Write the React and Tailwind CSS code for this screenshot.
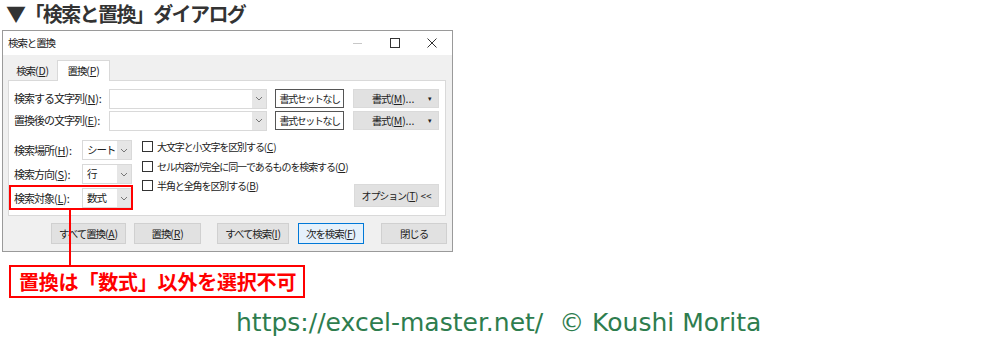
import React from "react";

const jp = { fontFamily: '"Noto Sans CJK JP", "Noto Sans", sans-serif' };
const T = "text-[10.5px] tracking-[-1.1px] whitespace-nowrap text-[#222]";

function U({ c }) {
  return (
    <span className="tracking-[-0.2px]">
      (<span className="underline underline-offset-1">{c}</span>)
    </span>
  );
}

function Chevron() {
  return (
    <svg width="8" height="5" viewBox="0 0 8 5">
      <path d="M1 1 L4 4 L7 1" fill="none" stroke="#777" strokeWidth="1" />
    </svg>
  );
}

function Combo({ text, w }) {
  return (
    <div className={`flex h-[20px] ${w} border border-[#d9d9d9] bg-white shrink-0`}>
      <div className={`flex-1 pl-[4px] leading-[18px] ${T}`}>{text}</div>
      <div className="w-[14px] bg-[#e6e6e6] flex items-center justify-center">
        <Chevron />
      </div>
    </div>
  );
}

function Check({ children }) {
  return (
    <div className="flex items-center h-[19.5px]">
      <div className="w-[11px] h-[11px] border border-[#333] bg-white shrink-0" />
      <span className="ml-[4px] text-[10px] tracking-[-1.1px] whitespace-nowrap text-[#222]">{children}</span>
    </div>
  );
}

function Btn({ w, children, blue }) {
  return (
    <div
      className={`${w} h-[21px] flex items-center justify-center ${T} ${
        blue ? "border border-[#0078d7] bg-[#e5f1fb]" : "border border-[#d0d0d0] bg-[#e1e1e1]"
      }`}
    >
      {children}
    </div>
  );
}

function FormatRow({ label, k }) {
  return (
    <div className="flex items-center h-[19px]">
      <div className="w-[100px] pl-[5px] text-[11px] tracking-[-1px] whitespace-nowrap text-[#222]">
        {label}
        <U c={k} />:
      </div>
      <Combo text="" w="w-[158px]" />
      <div className="ml-[8px] w-[69px] h-[19px] border border-[#555] bg-white flex items-center justify-center text-[10px] tracking-[-1.4px] whitespace-nowrap text-[#222] shrink-0">
        書式セットなし
      </div>
      <div className={`ml-[9px] w-[86px] h-[19px] bg-[#e1e1e1] border border-[#dadada] flex items-center shrink-0 ${T}`}>
        <span className="flex-1 text-center pl-[4px]">
          書式<U c="M" />
          <span className="tracking-[0px]">...</span>
        </span>
        <span className="w-[10px] text-[7px] leading-none">▾</span>
      </div>
    </div>
  );
}

export default function App() {
  return (
    <div className="w-[1000px] h-[345px] bg-white relative overflow-hidden" style={jp}>
      {/* heading */}
      <div className="h-[30px] pl-[6px] pt-[1px] text-[20px] leading-[26px] font-bold tracking-[-1.6px] text-[#333] whitespace-nowrap">
        ▼「検索と置換」ダイアログ
      </div>

      {/* dialog */}
      <div className="ml-[2px] w-[451px] h-[222px] border border-[#9a9a9a] bg-[#f0f0f0] flex flex-col">
        {/* title bar */}
        <div className="h-[24px] bg-white flex items-center shrink-0">
          <span className={`pl-[5px] ${T}`}>検索と置換</span>
          <div className="ml-auto flex items-center h-full">
            <div className="w-[38px] flex justify-center">
              <div className="w-[9px] h-px bg-[#c8c8c8]" />
            </div>
            <div className="w-[38px] flex justify-center">
              <div className="w-[10px] h-[10px] border border-[#333]" />
            </div>
            <div className="w-[38px] flex justify-center pr-[2px]">
              <svg width="10" height="10" viewBox="0 0 10 10">
                <path d="M0.5 0.5 L9.5 9.5 M9.5 0.5 L0.5 9.5" stroke="#333" strokeWidth="1" />
              </svg>
            </div>
          </div>
        </div>

        {/* body */}
        <div className="pl-[5px] pt-[4px] flex-1 flex flex-col">
          {/* tabs */}
          <div className="flex items-end h-[21px] relative z-10">
            <div className={`w-[49px] h-[19px] flex items-center justify-center ${T}`}>
              検索<U c="D" />
            </div>
            <div className={`w-[53px] h-[21px] -mb-px bg-white border border-b-0 border-[#d9d9d9] flex items-center justify-center ${T}`}>
              置換<U c="P" />
            </div>
          </div>

          {/* panel */}
          <div className="w-[438px] h-[136px] bg-white border border-[#d9d9d9] flex flex-col">
            <div className="mt-[8px]">
              <FormatRow label="検索する文字列" k="N" />
            </div>
            <div className="mt-[3px]">
              <FormatRow label="置換後の文字列" k="E" />
            </div>

            <div className="flex mt-[7px]">
              <div className="flex flex-col gap-[4px] pt-[3px]">
                {[
                  ["検索場所", "H", "シート"],
                  ["検索方向", "S", "行"],
                  ["検索対象", "L", "数式"],
                ].map(([l, k, v]) => (
                  <div key={k} className="flex items-center h-[20px]">
                    <div className="w-[73px] pl-[5px] text-[11px] tracking-[-1px] whitespace-nowrap text-[#222]">
                      {l}
                      <U c={k} />:
                    </div>
                    <Combo text={v} w="w-[50px]" />
                  </div>
                ))}
              </div>
              <div className="ml-[10px] flex flex-col">
                <Check>
                  大文字と小文字を区別する<U c="C" />
                </Check>
                <Check>
                  セル内容が完全に同一であるものを検索する<U c="O" />
                </Check>
                <Check>
                  半角と全角を区別する<U c="B" />
                </Check>
              </div>
              <div className="ml-auto mr-[6px] self-end mb-[1px] w-[85px] h-[23px] bg-[#e1e1e1] border border-[#dadada] flex items-center justify-center text-[10px] tracking-[-1.1px] whitespace-nowrap text-[#222] shrink-0">
                オプション<U c="T" />
                <span className="tracking-[0px]">&nbsp;&lt;&lt;</span>
              </div>
            </div>
          </div>

          {/* buttons */}
          <div className="flex mt-[7px] ml-[43px]">
            <Btn w="w-[75px]">
              すべて置換<U c="A" />
            </Btn>
            <div className="ml-[8px]">
              <Btn w="w-[67px]">
                置換<U c="R" />
              </Btn>
            </div>
            <div className="ml-[16px]">
              <Btn w="w-[72px]">
                すべて検索<U c="I" />
              </Btn>
            </div>
            <div className="ml-[9px]">
              <Btn w="w-[66px]" blue>
                次を検索<U c="F" />
              </Btn>
            </div>
            <div className="ml-[17px]">
              <Btn w="w-[66px]">閉じる</Btn>
            </div>
          </div>
        </div>
      </div>

      {/* callout */}
      <div className="ml-[9px] mt-[13px] w-[296px] h-[33px] border-2 border-[#ff0000] bg-white flex items-center pl-[8px] text-[20px] font-bold text-[#ff0000] tracking-[-0.2px] whitespace-nowrap relative z-10">
        置換は「数式」以外を選択不可
      </div>

      {/* footer */}
      <div
        className="ml-[236px] mt-[11px] text-[25px] leading-[28px] text-[#2e7d4e] whitespace-nowrap"
        style={{ fontFamily: '"DejaVu Sans", sans-serif' }}
      >
        https://excel-master.net/&nbsp;&nbsp;© Koushi Morita
      </div>

      {/* annotation overlays */}
      <div className="absolute left-[9px] top-[185px] w-[124px] h-[25px] border-2 border-[#ff0000] z-20" />
      <div className="absolute left-[69px] top-[209px] w-[2px] h-[57px] bg-[#ff0000] z-20" />
    </div>
  );
}
